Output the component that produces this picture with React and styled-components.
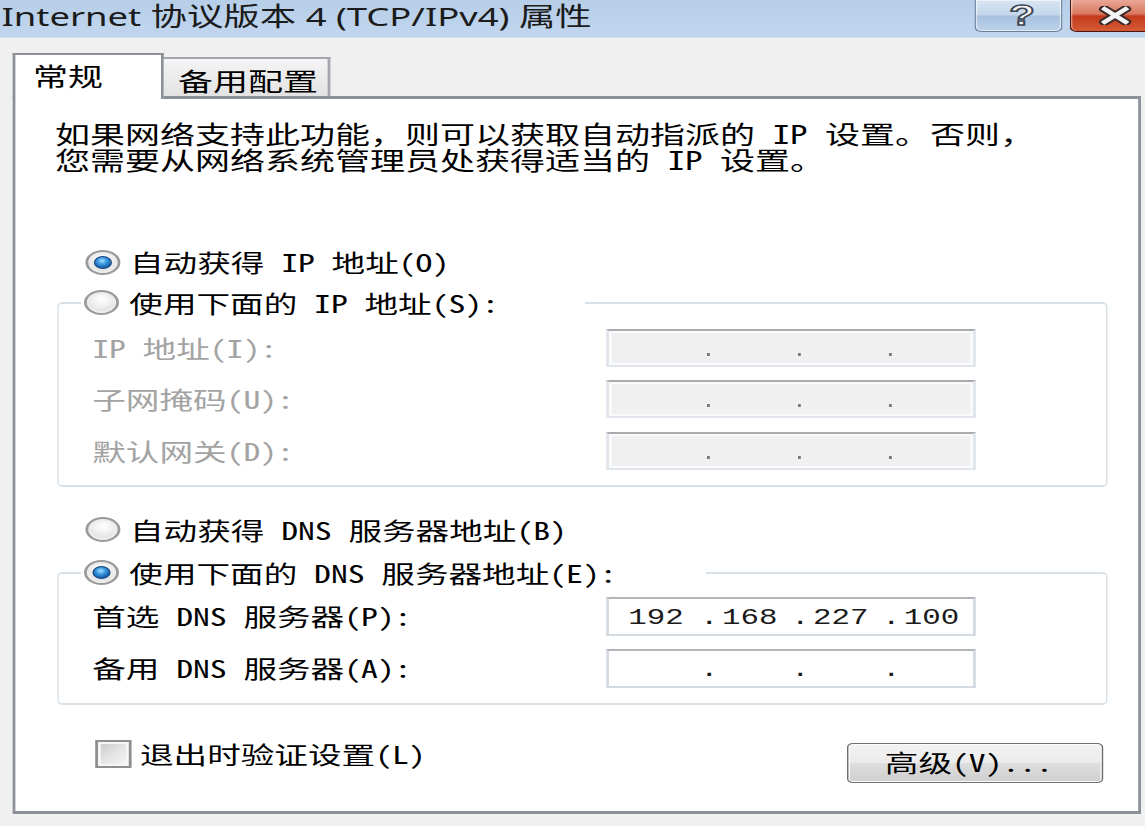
import React from 'react';
import styled, { createGlobalStyle, css } from 'styled-components';

const CJK = `"Noto Sans Mono CJK SC", "Noto Sans CJK SC", sans-serif`;

const GlobalStyle = createGlobalStyle`
  html, body {
    margin: 0;
    padding: 0;
    background: #f0f0f0;
    overflow: hidden;
  }
`;

export default function App() {
  return (
    <>
      <GlobalStyle />
      <Stage>
        <TitleBar>
          <Title>Internet 协议版本 4 (TCP/IPv4) 属性</Title>
          <HelpButton>?</HelpButton>
          <CloseButton>
            <svg width="23" height="19" viewBox="0 0 23 19">
              <path d="M4 3 L19 16 M19 3 L4 16" stroke="#3b2a2a" strokeWidth="7.4" strokeLinecap="square" fill="none" />
              <path d="M4 3 L19 16 M19 3 L4 16" stroke="#f4f4f4" strokeWidth="3.8" strokeLinecap="square" fill="none" />
            </svg>
          </CloseButton>
        </TitleBar>

        <TabStrip>
          <Tab active>常规</Tab>
          <Tab>备用配置</Tab>
        </TabStrip>

        <Panel>
          <Intro>
            <IntroLine>如果网络支持此功能，则可以获取自动指派的 IP 设置。否则，</IntroLine>
            <IntroLine>您需要从网络系统管理员处获得适当的 IP 设置。</IntroLine>
          </Intro>

          <RadioRow top={75}>
            <Radio checked />
            <Label>自动获得 IP 地址(O)</Label>
          </RadioRow>

          <Group top={10.5}>
            <Legend width={360}>
              <RadioRow>
                <Radio />
                <Label>使用下面的 IP 地址(S):</Label>
              </RadioRow>
            </Legend>
            <Rows top={11} gap={13.5} bottom={15}>
              <Label disabled>IP 地址(I):</Label>
              <IpBox disabled h={38} />
              <Label disabled>子网掩码(U):</Label>
              <IpBox disabled h={38} />
              <Label disabled>默认网关(D):</Label>
              <IpBox disabled h={38} />
            </Rows>
          </Group>

          <RadioRow top={28}>
            <Radio />
            <Label>自动获得 DNS 服务器地址(B)</Label>
          </RadioRow>

          <Group top={13}>
            <Legend width={446.6}>
              <RadioRow>
                <Radio checked />
                <Label>使用下面的 DNS 服务器地址(E):</Label>
              </RadioRow>
            </Legend>
            <Rows top={9} gap={13} bottom={15}>
              <Label>首选 DNS 服务器(P):</Label>
              <IpBox h={39} values={['192', '168', '227', '100']} />
              <Label>备用 DNS 服务器(A):</Label>
              <IpBox h={39} />
            </Rows>
          </Group>

          <Footer>
            <CheckRow>
              <Checkbox />
              <Label>退出时验证设置(L)</Label>
            </CheckRow>
            <Button>高级(V)...</Button>
          </Footer>
        </Panel>
      </Stage>
    </>
  );
}

function Radio({ checked = false }) {
  return <RadioDot checked={checked} />;
}

function IpBox({ disabled = false, h, values = ['', '', '', ''] }) {
  return (
    <IpFrame disabled={disabled} h={h}>
      {values.map((v, i) => (
        <React.Fragment key={i}>
          {i > 0 && (disabled ? <IpPoint /> : <IpDot>.</IpDot>)}
          <IpField>{v}</IpField>
        </React.Fragment>
      ))}
    </IpFrame>
  );
}

/* the source picture is stretched 1.4x sideways; lay out at native width and stretch */
const Stage = styled.div`
  width: 818px;
  height: 826px;
  transform: scaleX(1.4);
  transform-origin: 0 0;
  background: #f0f0f0;
  display: flex;
  flex-direction: column;
  font-family: ${CJK};
  color: #000;
`;

const TitleBar = styled.div`
  flex: none;
  height: 38px;
  display: flex;
  align-items: flex-start;
  background: linear-gradient(#b7cee8, #c1d6ee);
  border-bottom: 1px solid #d3e1f0;
  box-sizing: border-box;
`;

const Title = styled.div`
  flex: 1;
  padding-left: 1px;
  font-family: "Noto Sans", "Noto Sans CJK SC", sans-serif;
  font-size: 26px;
  line-height: 32px;
  color: #1b1b1b;
  white-space: nowrap;
`;

const HelpButton = styled.div`
  flex: none;
  width: 63.7px;
  height: 32px;
  margin-right: 5px;
  box-sizing: border-box;
  border: 1px solid #6a7d96;
  border-top: none;
  border-radius: 0 0 5px 5px;
  background: linear-gradient(#d8e5f3 0%, #c4d6eb 48%, #a8c1de 52%, #bcd2ea 100%);
  box-shadow: inset 0 0 0 1px rgba(255, 255, 255, 0.55);
  padding-left: 5px;
  text-align: center;
  font-family: "Liberation Sans", sans-serif;
  font-weight: bold;
  font-size: 30px;
  line-height: 30px;
  color: #f6f6f6;
  -webkit-text-stroke: 1.5px #3c4655;
`;

const CloseButton = styled.div`
  flex: none;
  width: 53.6px;
  height: 32px;
  box-sizing: border-box;
  padding: 6px 0 0 20px;
  border-left: 1px solid #4a1612;
  border-bottom: 1px solid #4a1612;
  border-radius: 0 0 0 5px;
  background: linear-gradient(#e9a797 0%, #d9775f 45%, #c43a1b 52%, #d45a36 100%);
  box-shadow: inset 1px 0 0 rgba(255, 255, 255, 0.4);
`;

const TabStrip = styled.div`
  flex: none;
  height: 58px;
  display: flex;
  align-items: flex-end;
  padding-left: 8.6px;
  position: relative;
  z-index: 1;
`;

const Tab = styled.div`
  box-sizing: border-box;
  font-family: "Noto Sans CJK SC", sans-serif;
  font-size: 25px;
  white-space: nowrap;
  width: 118.6px;
  height: 39px;
  padding-left: 10px;
  line-height: 42px;
  border: 2px solid #a3a7ad;
  border-left: none;
  border-bottom: none;
  background: linear-gradient(#f4f4f4, #e3e3e3);

  ${p => p.active && css`
    width: 108.5px;
    height: 46px;
    margin-bottom: -3px;
    padding-left: 13px;
    line-height: 40px;
    border: 2px solid #8b9099;
    border-bottom: none;
    background: #fff;
  `}
`;

const Panel = styled.div`
  flex: none;
  box-sizing: border-box;
  width: 806.4px;
  height: 718px;
  margin-left: 8.6px;
  border: solid #8b9099;
  border-width: 3px 2px;
  background: #fff;
  padding-left: 28.7px;
  display: flex;
  flex-direction: column;
  align-items: flex-start;
`;

const Intro = styled.div`
  margin-top: 21px;
  display: flex;
  flex-direction: column;
`;

const IntroLine = styled.div`
  height: 26px;
  font-size: 25px;
  line-height: 26px;
  white-space: nowrap;
`;

const RadioRow = styled.div`
  display: flex;
  align-items: center;
  height: 30px;
  gap: 7.2px;
  margin-top: ${p => p.top || 0}px;
  padding-left: ${p => (p.top === undefined ? 2.3 : 21.4)}px;
`;

const RadioDot = styled.span`
  position: relative;
  flex: none;
  width: 25px;
  height: 25px;
  box-sizing: border-box;
  border-radius: 50%;
  border: 2px solid #9a9a9a;
  background: radial-gradient(circle at 50% 35%, #ffffff 0%, #f0f0f0 40%, #cfcfcf 100%);
  box-shadow: inset 0 0 0 2px #ececec;

  ${p => p.checked && css`
    &::after {
      content: '';
      position: absolute;
      inset: 4px;
      border-radius: 50%;
      border: 1px solid #16437a;
      background: radial-gradient(circle at 45% 35%, #a8e2ff 0%, #3a9ae0 35%, #135aa6 75%, #0c3f7a 100%);
    }
  `}
`;

const Label = styled.span`
  font-size: 24px;
  line-height: 30px;
  white-space: nowrap;
  color: ${p => (p.disabled ? '#a3a3a3' : '#000')};
`;

const Group = styled.fieldset`
  box-sizing: border-box;
  width: 749.3px;
  margin: ${p => p.top}px 0 0 2.1px;
  padding: 0;
  border: solid #d8e1e8;
  border-width: 2px 1.5px;
  border-radius: 4px;
  min-width: 0;
`;

const Legend = styled.legend`
  box-sizing: border-box;
  width: ${p => p.width}px;
  margin-left: 15.5px;
  padding: 0;
`;

const Rows = styled.div`
  display: grid;
  grid-template-columns: 367.2px 263.5px;
  align-items: center;
  row-gap: ${p => p.gap}px;
  margin-top: ${p => p.top}px;
  padding: 0 0 ${p => p.bottom}px 23.5px;
`;

const IpFrame = styled.div`
  box-sizing: border-box;
  height: ${p => p.h}px;
  display: grid;
  grid-template-columns: 63px 6px 59px 6px 59px 6px 1fr;
  grid-template-rows: ${p => p.h - 4}px;
  padding-left: 2px;
  border: 2px solid #d4dae1;
  border-top-color: #b2b5ba;
  background: #fff;
  font-family: "Liberation Mono", monospace;
  font-size: 22px;
  color: #1a1a1a;

  ${p => p.disabled && css`
    border-color: #e0e6ec;
    border-top-color: #a9abb0;
    background: #f0f0f0;
    box-shadow: inset 0 0 0 2px #fafafa;
  `}
`;

const IpField = styled.span`
  text-align: center;
  line-height: 40px;
  white-space: nowrap;
`;

const IpDot = styled.span`
  text-align: center;
  line-height: 40px;
`;

const IpPoint = styled.span`
  justify-self: start;
  align-self: end;
  width: 2.4px;
  height: 3px;
  margin: 0 0 9px 4.5px;
  background: #7a7a7a;
`;

const Footer = styled.div`
  align-self: stretch;
  display: flex;
  align-items: flex-start;
  margin-top: 35px;
  padding: 0 25px 0 28.6px;
`;

const CheckRow = styled.div`
  display: flex;
  align-items: center;
  gap: 5.7px;
  height: 28px;
`;

const Checkbox = styled.span`
  flex: none;
  width: 26.4px;
  height: 28px;
  box-sizing: border-box;
  border: 2px solid #8f8f8f;
  background: linear-gradient(135deg, #c8c8c8 0%, #e4e4e4 50%, #f8f8f8 100%);
  box-shadow: inset 0 0 0 2px #f6f6f6;
`;

const Button = styled.div`
  margin-left: auto;
  margin-top: 3px;
  box-sizing: border-box;
  width: 183px;
  height: 40px;
  border: 1.5px solid #707070;
  border-radius: 4px;
  background: linear-gradient(#f3f3f3 0%, #ebebeb 48%, #dddddd 52%, #cfcfcf 100%);
  box-shadow: inset 0 0 0 1px #fbfbfb;
  padding-left: 26px;
  font-size: 24px;
  line-height: 36px;
  white-space: nowrap;
`;
